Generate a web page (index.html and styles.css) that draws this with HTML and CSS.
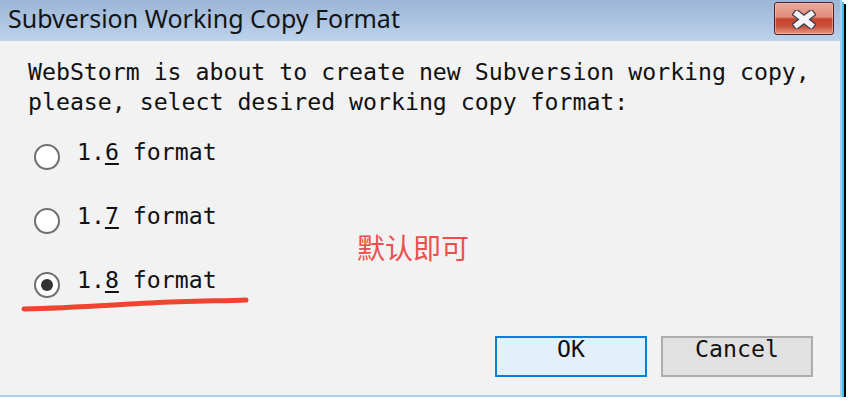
FILE: index.html
```html
<!DOCTYPE html>
<html>
<head>
<meta charset="utf-8">
<link rel="stylesheet" href="styles.css">
</head>
<body>
<div class="window">
  <div class="titlebar">
    <span class="title">Subversion Working Copy Format</span>
    <div class="close">
      <svg width="24" height="19" viewBox="0 0 24 19">
        <path d="M5 4 L19 15 M19 4 L5 15" stroke="#3b3f52" stroke-width="8" stroke-linecap="square" fill="none"/>
        <path d="M5 4 L19 15 M19 4 L5 15" stroke="#f4f4f6" stroke-width="5.5" stroke-linecap="square" fill="none"/>
      </svg>
    </div>
  </div>
  <div class="content">
    <p class="message">WebStorm is about to create new Subversion working copy,<br>please, select desired working copy format:</p>
    <div class="options">
      <div class="option"><span class="radio"></span><span class="label">1.<u>6</u> format</span></div>
      <div class="option"><span class="radio"></span><span class="label">1.<u>7</u> format</span></div>
      <div class="option"><span class="radio checked"></span><span class="label">1.<u>8</u> format</span></div>
    </div>
    <div class="buttons">
      <div class="btn btn-ok">OK</div>
      <div class="btn btn-cancel">Cancel</div>
    </div>
  </div>
  <div class="note">默认即可</div>
  <svg class="mark" width="260" height="40" viewBox="0 0 260 40">
    <path d="M24 28 C70 27 110 24 150 22 C190 20 220 20 246 19" stroke="#ee4430" stroke-width="5" stroke-linecap="round" fill="none"/>
  </svg>
</div>
</body>
</html>
```

FILE: styles.css
```css
html, body {
  margin: 0;
  padding: 0;
  background: #ffffff;
}

.window {
  position: relative;
  width: 840px;
  height: 395px;
  background: #f2f2f2;
  border-right: 2px solid #aacbeb;
  border-bottom: 2px solid #aacbeb;
  box-shadow: 2px 2px 0 #3cc2ea, 4px 4px 0 #000000;
}

.titlebar {
  height: 41px;
  box-sizing: border-box;
  display: flex;
  justify-content: space-between;
  align-items: flex-start;
  padding: 2px 6px 0 8px;
  background: linear-gradient(#9cb5d5, #bcd3ec);
}

.title {
  font-family: "Noto Sans", sans-serif;
  font-size: 25px;
  line-height: 34px;
  color: #141414;
  margin-top: -1px;
}

.close {
  width: 60px;
  height: 33px;
  box-sizing: border-box;
  border: 1px solid #4a1f2e;
  border-radius: 3px;
  background: linear-gradient(#eaa99b 0%, #df8c7a 45%, #c4432c 52%, #c9503a 75%, #e39986 100%);
  box-shadow: inset 0 0 0 1px rgba(255, 200, 190, 0.5);
  display: flex;
  align-items: center;
  justify-content: center;
}

.close svg {
  display: block;
  margin-top: 1px;
}

.content {
  padding: 16px 0 0 28px;
  font-family: "DejaVu Sans Mono", monospace;
  font-size: 23.2px;
  color: #111111;
}

.message {
  margin: 0;
  line-height: 30px;
  white-space: nowrap;
}

.options {
  margin-top: 8px;
  display: flex;
  flex-direction: column;
}

.option {
  height: 64px;
  display: flex;
  align-items: flex-start;
}

.radio {
  width: 26px;
  height: 26px;
  box-sizing: border-box;
  margin: 19px 17px 0 6px;
  border: 2px solid #6f6f6f;
  border-radius: 50%;
  background: radial-gradient(circle at 50% 40%, #ffffff 60%, #ececec 100%);
  display: flex;
  align-items: center;
  justify-content: center;
}

.radio.checked::after {
  content: "";
  width: 12px;
  height: 12px;
  border-radius: 50%;
  background: #333333;
}

.label {
  line-height: 30px;
  margin-top: 12px;
}

.label u {
  text-decoration-thickness: 2px;
  text-underline-offset: 3px;
}

.buttons {
  margin-top: 19px;
  padding-right: 27px;
  display: flex;
  justify-content: flex-end;
  gap: 14px;
}

.btn {
  width: 152px;
  height: 41px;
  box-sizing: border-box;
  padding-top: 1px;
  line-height: 20px;
  text-align: center;
  border: 2px solid #adadad;
  background: #e1e1e1;
}

.btn-ok {
  border-color: #0a7fd6;
  background: #e3f0fa;
}

.note {
  position: absolute;
  left: 357px;
  top: 230px;
  font-family: "Noto Sans CJK SC", sans-serif;
  font-size: 28px;
  line-height: 34px;
  color: #ee4d4d;
}

.mark {
  position: absolute;
  left: 0;
  top: 281px;
}
```
